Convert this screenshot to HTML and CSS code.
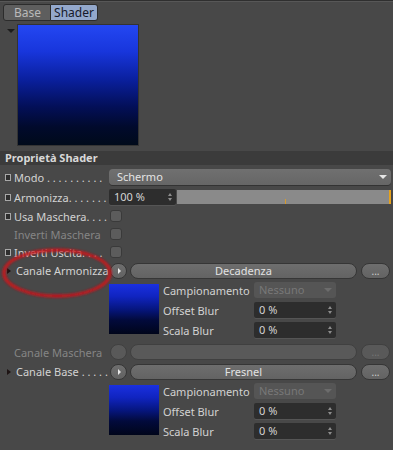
FILE: index.html
```html
<!DOCTYPE html>
<html lang="it">
<head>
    <meta charset="UTF-8">
    <meta name="viewport" content="width=device-width, initial-scale=1.0">
    <title>Shader</title>
    <link rel="stylesheet" href="styles.css">
</head>
<body>

    <div class="topline"></div>

    <div class="tabs">
        <div class="tab">Base</div>
        <div class="tab active">Shader</div>
    </div>

    <div class="preview-row">
        <span class="fold"></span>
        <div class="preview"></div>
    </div>

    <div class="section-head">Proprietà Shader</div>

    <div class="props">
        <div class="row">
            <div class="label"><i class="key"></i>Modo . . . . . . . . . .</div>
            <div class="dropdown">Schermo<span class="arrow"></span></div>
        </div>
        <div class="row">
            <div class="label"><i class="key"></i>Armonizza. . . . . . .</div>
            <div class="number wide">100 %<span class="spin"></span></div>
            <div class="slider"><span class="tick"></span></div>
        </div>
        <div class="row short">
            <div class="label"><i class="key"></i>Usa Maschera. . . .</div>
            <div class="check"></div>
        </div>
        <div class="row short">
            <div class="label off"><i class="nokey"></i>Inverti Maschera</div>
            <div class="check"></div>
        </div>
        <div class="row short">
            <div class="label"><i class="key"></i>Inverti Uscita. . . .</div>
            <div class="check"></div>
        </div>

        <div class="row channel">
            <div class="label"><i class="open"></i>Canale Armonizza</div>
            <div class="round"><span class="play"></span></div>
            <div class="pill">Decadenza</div>
            <div class="more">...</div>
        </div>
        <div class="sub">
            <div class="thumb"></div>
            <div class="sub-rows">
                <div class="sub-row">
                    <span class="sub-label">Campionamento</span>
                    <div class="select-off">Nessuno<span class="arrow dim"></span></div>
                </div>
                <div class="sub-row">
                    <span class="sub-label">Offset Blur</span>
                    <div class="number">0 %<span class="spin"></span></div>
                </div>
                <div class="sub-row">
                    <span class="sub-label">Scala Blur</span>
                    <div class="number">0 %<span class="spin"></span></div>
                </div>
            </div>
        </div>

        <div class="row channel gap">
            <div class="label off"><i class="nokey"></i>Canale Maschera</div>
            <div class="round off"></div>
            <div class="pill off"></div>
            <div class="more off">...</div>
        </div>
        <div class="row channel">
            <div class="label"><i class="open"></i>Canale Base . . . . .</div>
            <div class="round"><span class="play"></span></div>
            <div class="pill">Fresnel</div>
            <div class="more">...</div>
        </div>
        <div class="sub">
            <div class="thumb"></div>
            <div class="sub-rows">
                <div class="sub-row">
                    <span class="sub-label">Campionamento</span>
                    <div class="select-off">Nessuno<span class="arrow dim"></span></div>
                </div>
                <div class="sub-row">
                    <span class="sub-label">Offset Blur</span>
                    <div class="number">0 %<span class="spin"></span></div>
                </div>
                <div class="sub-row">
                    <span class="sub-label">Scala Blur</span>
                    <div class="number">0 %<span class="spin"></span></div>
                </div>
            </div>
        </div>
    </div>

    <!-- cerchio rosso di evidenziazione -->
    <svg class="mark" width="120" height="60" viewBox="0 0 120 60">
        <defs>
            <filter id="soft" x="-10%" y="-20%" width="120%" height="140%">
                <feGaussianBlur stdDeviation="0.9"/>
            </filter>
        </defs>
        <ellipse cx="57" cy="29" rx="53" ry="23" fill="none" stroke="#c8141c" stroke-width="3.5" filter="url(#soft)" opacity="0.9"/>
    </svg>

</body>
</html>
```

FILE: styles.css
```css
body {
    margin: 0;
    width: 393px;
    height: 450px;
    overflow: hidden;
    position: relative;
    background: #484848;
    font-family: "Noto Sans", "DejaVu Sans", sans-serif;
    font-size: 11px;
    color: #d2d2d2;
}
.topline {
    height: 1px;
    background: #2f2f2f;
    border-bottom: 1px solid #575757;
}
.tabs {
    display: flex;
    padding: 2px 0 0 3px;
}
.tab {
    height: 15px;
    line-height: 15px;
    padding: 0 9px 0 10px;
    border: 1px solid #2c2c2c;
    background: #5e5e5e;
    color: #b9b9b9;
    font-size: 12px;
    border-radius: 3px 0 0 3px;
}
.tab.active {
    background: #93a8cc;
    color: #15192a;
    border-left: none;
    border-radius: 0 3px 3px 0;
    padding: 0 3px 0 3px;
}
.preview-row {
    display: flex;
    padding: 3px 0 0 7px;
}
.fold {
    width: 0;
    height: 0;
    margin-top: 5px;
    border-left: 4px solid transparent;
    border-right: 4px solid transparent;
    border-top: 4px solid #1c1c1c;
    margin-right: 2px;
}
.preview {
    width: 120px;
    height: 120px;
    border: 1px solid #333;
    background: linear-gradient(#2447f2 0%, #1836dc 22%, #0a209f 45%, #030f58 68%, #010a2c 85%, #000a1a 100%);
}
.section-head {
    margin-top: 5px;
    height: 14px;
    line-height: 14px;
    padding-left: 5px;
    background: #3b3b3b;
    font-weight: bold;
    color: #d8d8d8;
}
.props {
    padding-top: 2px;
}
.row {
    display: flex;
    align-items: center;
    height: 20px;
}
.row.short {
    height: 18px;
}
.row.channel {
    height: 19px;
}
.row.gap {
    margin-top: 2px;
    height: 20px;
}
.label {
    width: 109px;
    flex: none;
    display: flex;
    align-items: center;
    white-space: nowrap;
    overflow: hidden;
    padding-left: 5px;
    box-sizing: border-box;
}
.label.off {
    color: #858585;
}
.key {
    width: 4px;
    height: 5px;
    border: 1px solid #a8a8a8;
    background: #2e2e2e;
    margin-right: 3px;
    flex: none;
}
.nokey {
    width: 6px;
    height: 6px;
    margin-right: 3px;
    flex: none;
}
.open {
    width: 0;
    height: 0;
    border-top: 3px solid transparent;
    border-bottom: 3px solid transparent;
    border-left: 4px solid #1e1414;
    margin: 0 5px 0 2px;
    flex: none;
}
.dropdown {
    position: relative;
    flex: 1;
    margin-right: 2px;
    height: 16px;
    line-height: 16px;
    padding-left: 8px;
    background: linear-gradient(#707070, #666);
    border-radius: 4px;
    box-shadow: 0 1px 0 #333;
    color: #e4e4e4;
}
.arrow {
    position: absolute;
    right: 4px;
    top: 6px;
    width: 0;
    height: 0;
    border-left: 4px solid transparent;
    border-right: 4px solid transparent;
    border-top: 4px solid #e6e6e6;
}
.arrow.dim {
    border-top-color: #6c6c6c;
}
.number {
    position: relative;
    width: 82px;
    height: 16px;
    line-height: 16px;
    padding-left: 5px;
    box-sizing: border-box;
    background: #2d2d2d;
    border-radius: 2px;
    box-shadow: 0 1px 0 #555;
    color: #d4d4d4;
}
.number.wide {
    width: 67px;
    margin-right: 1px;
}
.spin {
    position: absolute;
    right: 4px;
    top: 4px;
    width: 0;
    height: 0;
    border-left: 2px solid transparent;
    border-right: 2px solid transparent;
    border-bottom: 3px solid #8d8d8d;
}
.spin::after {
    content: "";
    position: absolute;
    left: -2px;
    top: 5px;
    border-left: 2px solid transparent;
    border-right: 2px solid transparent;
    border-top: 3px solid #8d8d8d;
}
.slider {
    position: relative;
    flex: 1;
    margin-right: 2px;
    height: 14px;
    background: #8a8a8a;
    border-right: 2px solid #e6a21c;
}
.tick {
    position: absolute;
    left: 108px;
    bottom: 0;
    width: 1px;
    height: 5px;
    background: #d89a2a;
}
.check {
    width: 10px;
    height: 10px;
    margin-left: 1px;
    background: #5c5c5c;
    border: 1px solid #3a3a3a;
    border-radius: 3px;
}
.round {
    width: 17px;
    height: 16px;
    margin-left: 1px;
    border-radius: 8px;
    background: linear-gradient(#6e6e6e, #626262);
    border: 1px solid #363636;
    display: flex;
    align-items: center;
    justify-content: center;
    box-sizing: border-box;
    flex: none;
}
.round.off, .pill.off, .more.off {
    background: #595959;
    border-color: #404040;
    color: #767676;
}
.play {
    width: 0;
    height: 0;
    border-top: 3px solid transparent;
    border-bottom: 3px solid transparent;
    border-left: 3px solid #e8e8e8;
    margin-left: 1px;
}
.pill {
    width: 227px;
    height: 16px;
    line-height: 14px;
    margin-left: 3px;
    box-sizing: border-box;
    border: 1px solid #363636;
    border-radius: 8px;
    background: linear-gradient(#6e6e6e, #636363);
    text-align: center;
    color: #e2e2e2;
    flex: none;
}
.more {
    width: 29px;
    height: 16px;
    line-height: 14px;
    margin-left: 4px;
    box-sizing: border-box;
    border: 1px solid #363636;
    border-radius: 8px;
    background: linear-gradient(#6e6e6e, #636363);
    text-align: center;
    color: #d0d0d0;
    font-size: 10px;
    flex: none;
}
.sub {
    display: flex;
    height: 60px;
    padding-left: 109px;
}
.thumb {
    width: 50px;
    height: 50px;
    margin-top: 4px;
    background: linear-gradient(#1a30e0 0%, #1024c0 25%, #061680 50%, #020a3c 72%, #00051a 100%);
    flex: none;
}
.sub-rows {
    display: flex;
    flex-direction: column;
    margin-left: 4px;
}
.sub-row {
    display: flex;
    align-items: center;
    height: 20px;
}
.sub-label {
    width: 91px;
    color: #d2d2d2;
}
.select-off {
    position: relative;
    width: 82px;
    height: 16px;
    line-height: 16px;
    padding-left: 5px;
    box-sizing: border-box;
    background: #555;
    border-radius: 3px;
    color: #787878;
}
.mark {
    position: absolute;
    left: 0;
    top: 244px;
}
```
